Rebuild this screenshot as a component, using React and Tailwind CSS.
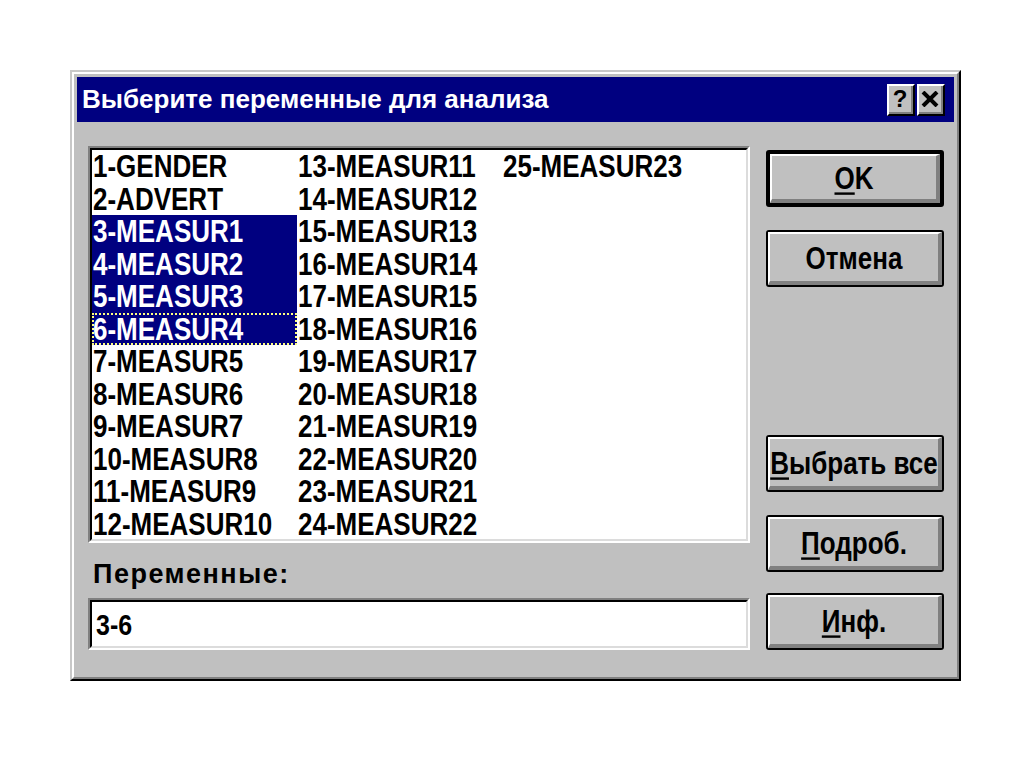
import React from "react";

const col1 = ["1-GENDER","2-ADVERT","3-MEASUR1","4-MEASUR2","5-MEASUR3","6-MEASUR4","7-MEASUR5","8-MEASUR6","9-MEASUR7","10-MEASUR8","11-MEASUR9","12-MEASUR10"];
const col2 = ["13-MEASUR11","14-MEASUR12","15-MEASUR13","16-MEASUR14","17-MEASUR15","18-MEASUR16","19-MEASUR17","20-MEASUR18","21-MEASUR19","22-MEASUR20","23-MEASUR21","24-MEASUR22"];
const col3 = ["25-MEASUR23"];

function N({ children }) {
  return (
    <span className="inline-block whitespace-nowrap scale-y-[1.2] origin-center">
      {children}
    </span>
  );
}

function U({ children }) {
  return <span className="underline decoration-2 underline-offset-[3px]">{children}</span>;
}

function Btn({ children, def }) {
  return (
    <div className={def ? "h-[57px] w-[178px] border-4 border-black rounded-[3px]" : "h-[57px] w-[178px] border-2 border-black rounded-[3px]"}>
      <div className="h-full border-t-2 border-l-2 border-t-white border-l-white border-b-4 border-r-4 border-b-[#808080] border-r-[#808080] flex items-center justify-center text-[26px] leading-none font-bold text-black">
        <N>{children}</N>
      </div>
    </div>
  );
}

function Cell({ text, sel, focus }) {
  let cls = "w-[205px] h-[32.5px] pl-[1px] text-[26px] leading-[32.5px] font-bold ";
  if (sel) cls += "bg-[#000080] text-white ";
  else cls += "text-black ";
  return (
    <div className={cls + (focus ? "outline-2 outline-dotted outline-[#ffff80] -outline-offset-2" : "")}>
      <N>{text}</N>
    </div>
  );
}

function CapBtn({ children }) {
  return (
    <div className="w-[28px] h-[32px] border-2 border-t-white border-l-white border-r-black border-b-black bg-[#c0c0c0]">
      <div className="h-full border-r-2 border-b-2 border-r-[#808080] border-b-[#808080] flex items-center justify-center text-black font-bold">
        {children}
      </div>
    </div>
  );
}

export default function App() {
  return (
    <div className="w-[1024px] h-[767px] bg-white pt-[70px] pl-[70px] font-['Liberation_Sans',Arial,sans-serif]">
      <div className="w-[891px] h-[611px] border-2 border-t-[#c8c8c8] border-l-[#c8c8c8] border-r-black border-b-black">
        <div className="h-full border-2 border-t-white border-l-white border-r-[#808080] border-b-[#808080] bg-[#c0c0c0] p-[3px] flex flex-col">
          {/* title bar */}
          <div className="h-[45px] bg-[#000080] flex items-center justify-between pl-[5px] pr-[9px]">
            <div className="text-white font-bold text-[26px] leading-none pb-[2px] whitespace-nowrap">
              Выберите переменные для анализа
            </div>
            <div className="flex gap-[2px]">
              <CapBtn>
                <span className="text-[24px] leading-none">?</span>
              </CapBtn>
              <CapBtn>
                <svg width="18" height="16" viewBox="0 0 18 16">
                  <path d="M2 1 L16 15 M16 1 L2 15" stroke="black" strokeWidth="4" />
                </svg>
              </CapBtn>
            </div>
          </div>

          {/* client */}
          <div className="flex pt-[24px] pl-[11px]">
            <div className="w-[662px] flex flex-col">
              <div className="h-[397px] border-2 border-t-[#808080] border-l-[#808080] border-r-white border-b-white">
                <div className="h-full border-2 border-t-black border-l-black border-r-[#dcdcdc] border-b-[#dcdcdc] bg-white">
                  <div className="grid grid-flow-col grid-rows-[repeat(12,32.5px)] grid-cols-[repeat(3,205px)]">
                    {col1.map((t, i) => (
                      <Cell key={t} text={t} sel={i >= 2 && i <= 5} focus={i === 5} />
                    ))}
                    {col2.map((t) => (
                      <Cell key={t} text={t} />
                    ))}
                    {col3.map((t) => (
                      <Cell key={t} text={t} />
                    ))}
                  </div>
                </div>
              </div>
              <div className="mt-[18px] pl-[5px] text-[27px] leading-none font-bold tracking-[1.5px] text-black">
                Переменные:
              </div>
              <div className="mt-[10px] h-[52px] border-2 border-t-[#808080] border-l-[#808080] border-r-white border-b-white">
                <div className="h-full border-2 border-t-black border-l-black border-r-[#dcdcdc] border-b-[#dcdcdc] bg-white flex items-center pl-[4px] text-[25px] leading-none font-bold text-black">
                  <N>3-6</N>
                </div>
              </div>
            </div>

            <div className="ml-[16px] w-[178px] flex flex-col pt-[4px]">
              <Btn def><U>O</U>K</Btn>
              <div className="mt-[23px]">
                <Btn>Отмена</Btn>
              </div>
              <div className="mt-[148px]">
                <Btn><U>В</U>ыбрать все</Btn>
              </div>
              <div className="mt-[23px]">
                <Btn><U>П</U>одроб.</Btn>
              </div>
              <div className="mt-[21px]">
                <Btn><U>И</U>нф.</Btn>
              </div>
            </div>
          </div>
        </div>
      </div>
    </div>
  );
}
